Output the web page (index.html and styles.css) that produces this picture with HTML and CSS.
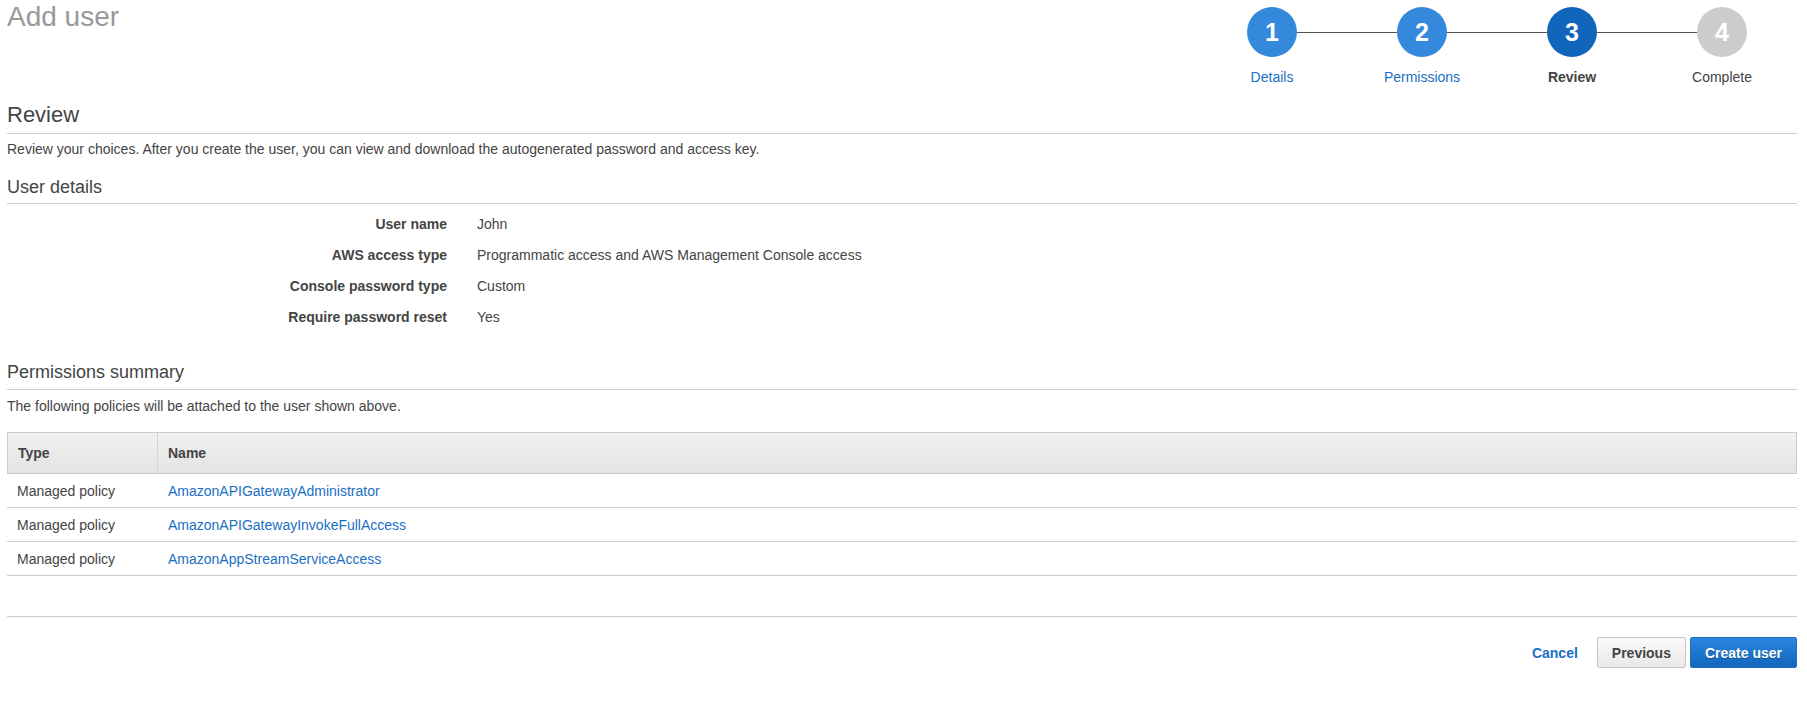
FILE: index.html
```html
<!DOCTYPE html>
<html lang="en">
<head>
<meta charset="utf-8">
<title>Add user</title>
<link rel="stylesheet" href="styles.css">
</head>
<body>
<div class="page">
  <header class="top">
    <h1 class="title">Add user</h1>
    <ol class="stepper">
      <li class="step step-done"><span class="circle">1</span><a class="step-label" href="#">Details</a></li>
      <li class="step step-done"><span class="circle">2</span><a class="step-label" href="#">Permissions</a></li>
      <li class="step step-current"><span class="circle">3</span><span class="step-label">Review</span></li>
      <li class="step step-todo"><span class="circle">4</span><span class="step-label">Complete</span></li>
    </ol>
  </header>

  <h2 class="section-title">Review</h2>
  <p class="intro">Review your choices. After you create the user, you can view and download the autogenerated password and access key.</p>

  <h3 class="sub-title">User details</h3>
  <dl class="details">
    <dt>User name</dt><dd>John</dd>
    <dt>AWS access type</dt><dd>Programmatic access and AWS Management Console access</dd>
    <dt>Console password type</dt><dd>Custom</dd>
    <dt>Require password reset</dt><dd>Yes</dd>
  </dl>

  <h3 class="sub-title sub-title-perm">Permissions summary</h3>
  <p class="perm-intro">The following policies will be attached to the user shown above.</p>

  <table class="policies">
    <thead>
      <tr><th class="col-type">Type</th><th>Name</th></tr>
    </thead>
    <tbody>
      <tr><td>Managed policy</td><td><a href="#">AmazonAPIGatewayAdministrator</a></td></tr>
      <tr><td>Managed policy</td><td><a href="#">AmazonAPIGatewayInvokeFullAccess</a></td></tr>
      <tr><td>Managed policy</td><td><a href="#">AmazonAppStreamServiceAccess</a></td></tr>
    </tbody>
  </table>

  <div class="footer">
    <a class="btn-cancel" href="#">Cancel</a>
    <button class="btn btn-secondary" type="button">Previous</button>
    <button class="btn btn-primary" type="button">Create user</button>
  </div>
</div>
</body>
</html>
```

FILE: styles.css
```css
* { box-sizing: border-box; }

html, body {
  margin: 0;
  padding: 0;
  background: #fff;
}

body {
  font-family: "Liberation Sans", Arial, Helvetica, sans-serif;
  font-size: 14px;
  line-height: 20px;
  color: #444;
}

a { color: #1a6fc4; text-decoration: none; }

.page {
  padding: 0 10px 0 7px;
}

/* header */
.top {
  display: flex;
  justify-content: space-between;
  align-items: flex-start;
  height: 87px;
}

.title {
  margin: 1px 0 0;
  font-size: 28px;
  line-height: 32px;
  font-weight: normal;
  color: #999;
}

.stepper {
  list-style: none;
  margin: 7px 0 0;
  padding: 0;
  display: grid;
  grid-template-columns: repeat(4, 150px);
}

.step {
  position: relative;
  display: flex;
  flex-direction: column;
  align-items: center;
}

.step:not(:last-child)::after {
  content: "";
  position: absolute;
  top: 25px;
  left: calc(50% + 25px);
  width: 100px;
  height: 1px;
  background: #555;
}

.circle {
  width: 50px;
  height: 50px;
  border-radius: 50%;
  display: flex;
  align-items: center;
  justify-content: center;
  color: #fff;
  font-size: 25px;
  font-weight: bold;
  background: #3589dc;
}

.step-current .circle { background: #1166bb; }
.step-todo .circle { background: #cccccc; }

.step-label {
  margin-top: 10px;
  line-height: 20px;
  font-size: 14px;
  white-space: nowrap;
}

.step-current .step-label { font-weight: bold; color: #444; }
.step-todo .step-label { color: #444; }

/* headings */
.section-title {
  margin: 15px 0 0;
  font-size: 22px;
  line-height: 26px;
  font-weight: normal;
  color: #444;
  padding-bottom: 5px;
  border-bottom: 1px solid #ccc;
}

.intro {
  margin: 5px 0 0;
}

.sub-title {
  margin: 16px 0 0;
  font-size: 18px;
  line-height: 24px;
  font-weight: normal;
  color: #444;
  padding-bottom: 4px;
  border-bottom: 1px solid #ccc;
}

.sub-title-perm {
  margin-top: 33px;
  padding-bottom: 5px;
}

.details {
  margin: 10px 0 0;
  display: grid;
  grid-template-columns: 440px 1fr;
  column-gap: 30px;
  row-gap: 11px;
}

.details dt {
  text-align: right;
  font-weight: bold;
}

.details dd { margin: 0; }

.perm-intro {
  margin: 6px 0 0;
}

/* table */
.policies {
  margin-top: 16px;
  width: 100%;
  border-collapse: separate;
  border-spacing: 0;
}

.policies th {
  height: 42px;
  padding: 0 10px;
  text-align: left;
  font-weight: bold;
  color: #444;
  background: linear-gradient(#f1f1f1, #e3e3e3);
  border-top: 1px solid #ccc;
  border-bottom: 1px solid #ccc;
}

.policies th:first-child { border-left: 1px solid #ccc; }
.policies th:last-child { border-right: 1px solid #ccc; }
.policies th + th { border-left: 1px solid #d4d4d4; }

.policies .col-type { width: 150px; }

.policies td {
  height: 34px;
  padding: 0 10px 0 10px;
  border-bottom: 1px solid #ccc;
}

.policies td + td { padding-left: 11px; }

/* footer */
.footer {
  margin-top: 40px;
  border-top: 1px solid #ccc;
  padding-top: 20px;
  display: flex;
  justify-content: flex-end;
  align-items: center;
  gap: 4px;
}

.btn-cancel {
  font-weight: bold;
  margin-right: 15px;
}

.btn {
  height: 31px;
  padding: 0 14px;
  font-family: inherit;
  font-size: 14px;
  font-weight: bold;
  border-radius: 2px;
  cursor: pointer;
}

.btn-secondary {
  color: #444;
  background: linear-gradient(#fafafa, #e8e8e8);
  border: 1px solid #c4c4c4;
}

.btn-primary {
  color: #fff;
  background: linear-gradient(#2b86e0, #1166bb);
  border: 1px solid #1a6fc4;
  text-shadow: 0 1px 1px rgba(0,0,0,0.25);
}
```
